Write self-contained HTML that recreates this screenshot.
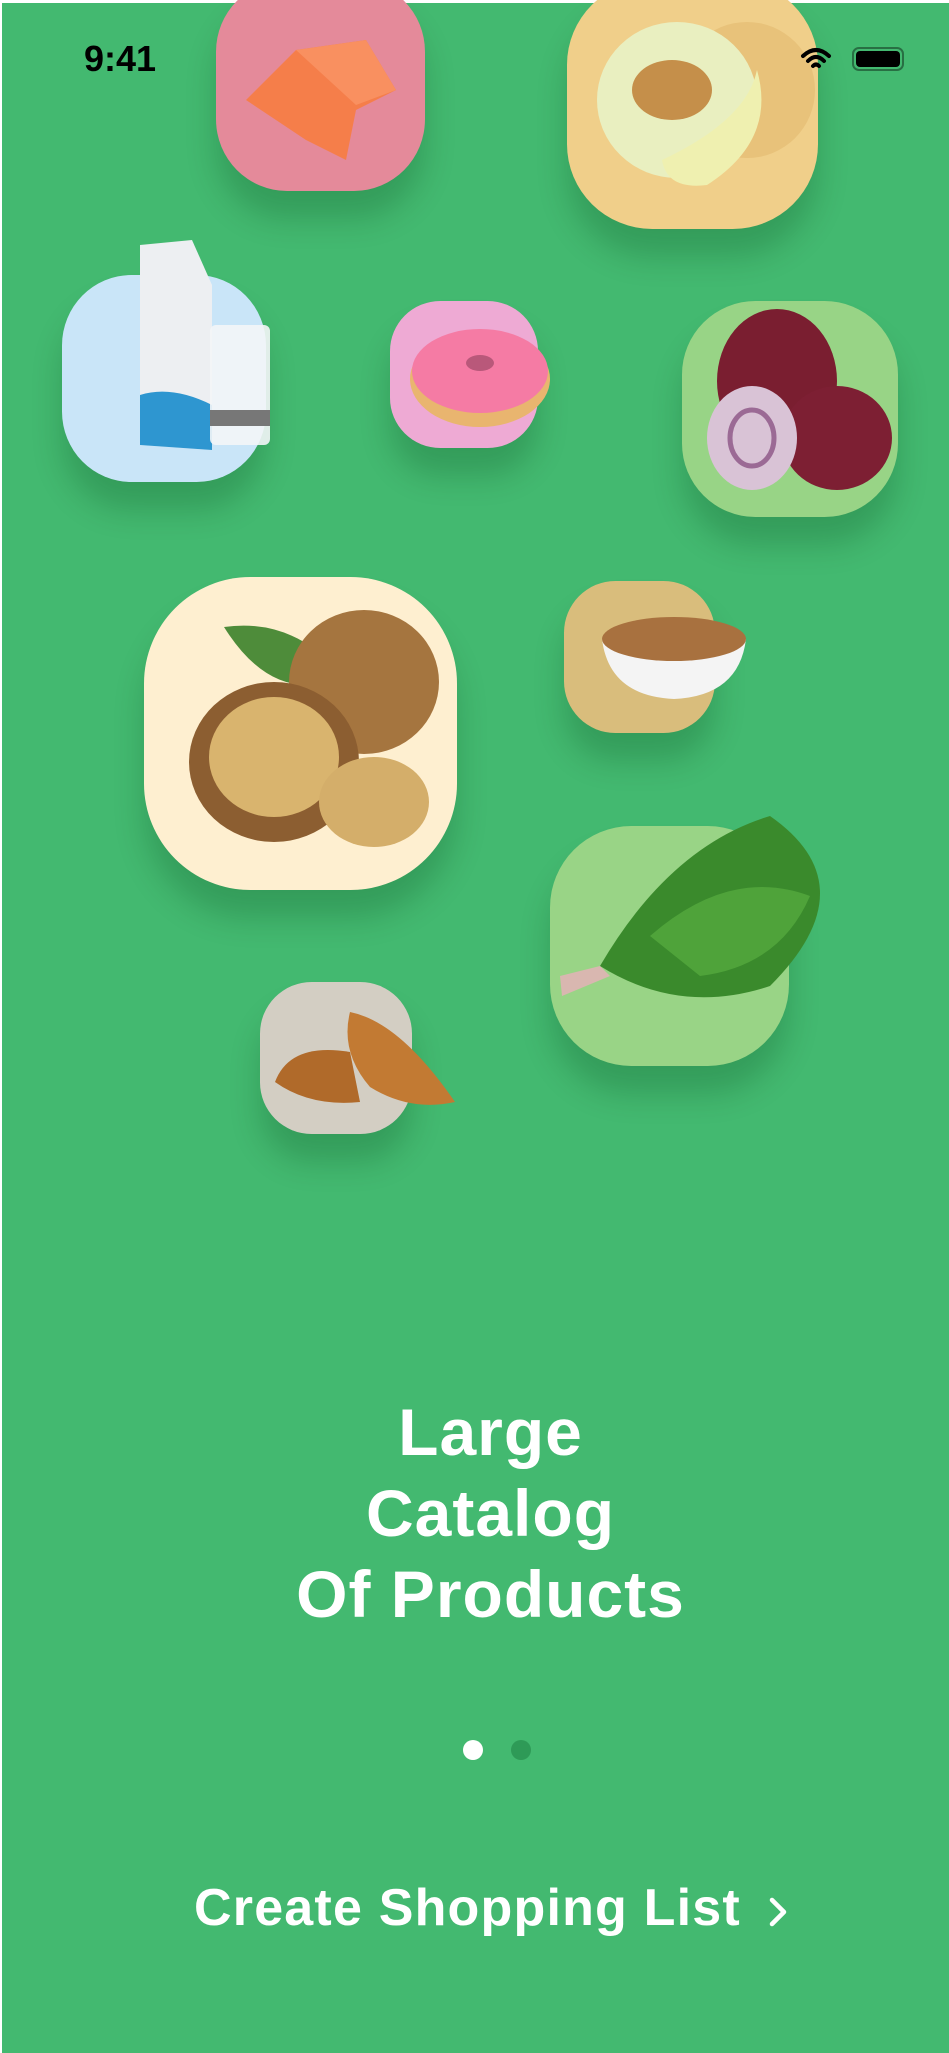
<!DOCTYPE html>
<html><head><meta charset="utf-8"><style>
html,body{margin:0;padding:0}
body{width:949px;height:2053px;background:#43B970;position:relative;overflow:hidden;font-family:"Liberation Sans",sans-serif}
.t{position:absolute;border-radius:34%;box-shadow:0 28px 30px rgba(0,60,20,.22)}
.t svg{position:absolute;overflow:visible}
.title{position:absolute;left:16px;width:949px;top:1392px;text-align:center;color:#fff;font-weight:bold;font-size:66px;line-height:81px;letter-spacing:1px}
.dot{position:absolute;width:20px;height:20px;border-radius:50%;top:1740px}
.btn{position:absolute;left:194px;top:1878px;color:#fff;font-weight:bold;font-size:52px;letter-spacing:1.2px;line-height:60px}
</style></head><body>
<div style="position:absolute;left:0;top:0;width:949px;height:3px;background:#fff"></div>
<div style="position:absolute;left:0;top:0;width:2px;height:2053px;background:#fff"></div>

<div class="t" style="left:216px;top:-20px;width:209px;height:211px;background:#E48A9A">
<svg width="209" height="211"><path d="M30 120 L80 70 L150 60 L180 110 L140 130 L130 180 L90 160 Z" fill="#F57E4A"/><path d="M80 70 L150 60 L180 110 L140 125 Z" fill="#F99060"/></svg></div>

<div class="t" style="left:567px;top:-20px;width:251px;height:249px;background:#F0CF8A">
<svg width="251" height="249"><circle cx="180" cy="110" r="68" fill="#E8C27A"/><ellipse cx="110" cy="120" rx="80" ry="78" fill="#E9EFC0"/><ellipse cx="105" cy="110" rx="40" ry="30" fill="#C58F4A"/><path d="M95 180 Q180 140 190 90 Q210 160 140 205 Q100 210 95 180Z" fill="#EFF0B0"/></svg></div>

<div class="t" style="left:62px;top:275px;width:204px;height:207px;background:#C9E5F8">
<svg width="204" height="207"><path d="M78 -30 L130 -35 L150 10 L150 175 L78 170 Z" fill="#EDEFF2"/><path d="M78 120 Q110 110 150 130 L150 175 L78 170Z" fill="#2E96D0"/><rect x="148" y="50" width="60" height="120" rx="6" fill="#F3F5F7" opacity=".9"/><rect x="148" y="135" width="60" height="16" fill="#777"/></svg></div>

<div class="t" style="left:390px;top:301px;width:148px;height:147px;background:#EEAAD4">
<svg width="148" height="147"><ellipse cx="90" cy="78" rx="70" ry="48" fill="#E9B56F"/><ellipse cx="90" cy="70" rx="68" ry="42" fill="#F57BA4"/><ellipse cx="90" cy="62" rx="14" ry="8" fill="#B9587A"/></svg></div>

<div class="t" style="left:682px;top:301px;width:216px;height:216px;background:#98D486">
<svg width="216" height="216"><ellipse cx="95" cy="80" rx="60" ry="72" fill="#7A1E30"/><ellipse cx="155" cy="137" rx="55" ry="52" fill="#7D1F33"/><ellipse cx="70" cy="137" rx="45" ry="52" fill="#D9C3D6"/><ellipse cx="70" cy="137" rx="22" ry="28" fill="none" stroke="#9B6A95" stroke-width="5"/></svg></div>

<div class="t" style="left:144px;top:577px;width:313px;height:313px;background:#FEEFD0">
<svg width="313" height="313"><path d="M80 50 Q150 40 200 100 Q130 130 80 50Z" fill="#4E8C3A"/><ellipse cx="220" cy="105" rx="75" ry="72" fill="#A5753F"/><ellipse cx="130" cy="185" rx="85" ry="80" fill="#8C5E31"/><ellipse cx="130" cy="180" rx="65" ry="60" fill="#D9B46E"/><ellipse cx="230" cy="225" rx="55" ry="45" fill="#D4AE6A"/></svg></div>

<div class="t" style="left:564px;top:581px;width:151px;height:152px;background:#D9BD7C">
<svg width="151" height="152"><path d="M38 58 L182 58 Q175 115 110 118 Q45 115 38 58Z" fill="#F4F4F4"/><ellipse cx="110" cy="58" rx="72" ry="22" fill="#A8713F"/></svg></div>

<div class="t" style="left:550px;top:826px;width:239px;height:240px;background:#99D486">
<svg width="239" height="240"><path d="M50 140 Q120 20 220 -10 Q320 60 220 160 Q130 190 50 140Z" fill="#3A8A2C"/><path d="M100 110 Q180 40 260 70 Q230 140 150 150Z" fill="#4FA33A"/><path d="M50 140 L10 150 L12 170 L60 150Z" fill="#D9B7B0"/></svg></div>

<div class="t" style="left:260px;top:982px;width:152px;height:152px;background:#D3CEC3">
<svg width="152" height="152"><path d="M15 100 Q30 60 90 70 L100 120 Q50 125 15 100Z" fill="#B06A2A"/><path d="M90 30 Q140 40 195 120 Q150 130 110 105 Q80 70 90 30Z" fill="#C27A33"/></svg></div>

<div style="position:absolute;left:84px;top:38px;font-size:36px;font-weight:bold;color:#000">9:41</div>
<svg style="position:absolute;left:800px;top:46px" width="32" height="26" viewBox="0 0 32 26"><path d="M3 10 Q16 -2 29 10 M8 15 Q16 7 24 15 M13 20 Q16 17 19 20" stroke="#000" stroke-width="4" fill="none" stroke-linecap="round"/></svg>
<div style="position:absolute;left:852px;top:47px;width:52px;height:24px;border:2px solid rgba(0,0,0,.4);border-radius:7px;box-sizing:border-box"></div>
<div style="position:absolute;left:856px;top:51px;width:44px;height:16px;background:#000;border-radius:4px"></div>

<div class="title">Large<br>Catalog<br>Of Products</div>

<div class="dot" style="left:463px;background:#fff"></div>
<div class="dot" style="left:511px;background:#2E9A57"></div>

<div class="btn">Create Shopping List</div>
<svg style="position:absolute;left:766px;top:1894px" width="24" height="36" viewBox="0 0 24 36"><path d="M6 6 L18 18 L6 30" stroke="#fff" stroke-width="4.5" fill="none" stroke-linecap="round" stroke-linejoin="round"/></svg>
</body></html>
